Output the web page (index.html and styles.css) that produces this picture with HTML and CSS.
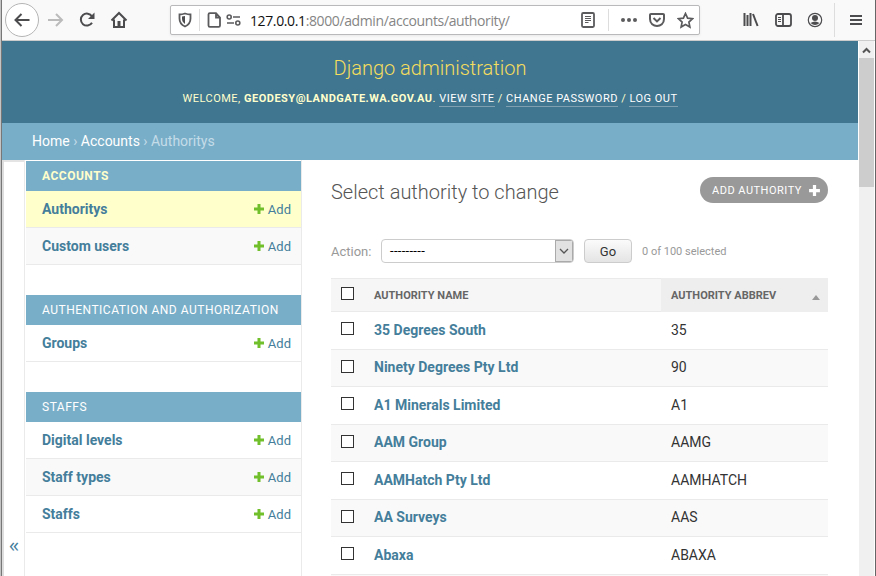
FILE: index.html
```
<!DOCTYPE html>
<html lang="en">
<head>
<meta charset="utf-8">
<title>Select authority to change</title>
<link rel="stylesheet" href="styles.css">
</head>
<body>
<svg class="defs" width="0" height="0">
  <symbol id="plus" viewBox="0 0 12 12"><path d="M4.500 1h3v3.500H11v3H7.500V11h-3V7.500H1v-3h3.500z"/></symbol>
</svg>
<div class="window">
  <div class="toolbar">
    <span class="back"><svg width="18" height="16" viewBox="0 0 18 16"><path d="M8.500 2 2.500 8l6 6M3 8h13.500"/></svg></span>
    <svg class="forward" width="18" height="16" viewBox="0 0 18 16"><path d="M9 2l6 6-6 6M15 8H1"/></svg>
    <svg class="reload" width="18" height="18" viewBox="0 0 18 18"><path d="M14 11.700A6 6 0 1 1 14 5.500"/><path class="solid" d="M16.500 1.500v6.500H10z"/></svg>
    <svg class="home" width="18" height="18" viewBox="0 0 18 18"><path d="M1.500 9.500 9 2l7.500 7.500M4 8.500V16h10V8.500"/><path class="solid" d="M7.500 10h3v6h-3z"/></svg>
    <div class="urlbar">
      <svg class="shield" width="14" height="16" viewBox="0 0 14 16"><path d="M7 1.500c2 .7 3.500 1 5.500 1v4c0 4-2 6.500-5.500 8-3.500-1.500-5.500-4-5.500-8v-4c2 0 3.500-.3 5.500-1z"/><path class="solid" d="M7 4v8C5 10.500 4 9 4 6.500V4.500z"/></svg>
      <i class="sep"></i>
      <svg class="page" width="14" height="16" viewBox="0 0 14 16"><path d="M1.500 2.500q0-1.300 1.300-1.300H9L13 5.500v8q0 1.300-1.300 1.300H2.800q-1.300 0-1.300-1.300zM9 1v4.500h4"/></svg>
      <svg class="perms" width="15" height="12" viewBox="0 0 15 12"><circle cx="3.200" cy="3" r="2"/><path d="M7 3h7M1 9h7"/><circle cx="11.800" cy="9" r="2"/></svg>
      <span class="url"><b>127.0.0.1</b>:8000/admin/accounts/authority/</span>
      <svg class="reader" width="14" height="16" viewBox="0 0 14 16"><rect x="1" y="1" width="12" height="14" rx="1.200"/><path class="thin" d="M4 4.500h6M4 6.500h6M4 8.500h6M4 10.500h3.500"/></svg>
      <i class="sep"></i>
      <svg class="dots" width="18" height="6" viewBox="0 0 18 6"><circle cx="3" cy="3" r="2"/><circle cx="9" cy="3" r="2"/><circle cx="15" cy="3" r="2"/></svg>
      <svg class="pocket" width="16" height="14" viewBox="0 0 16 14"><path d="M1 1.800Q1 1 2 1h12q1 0 1 .8V6c0 9.300-14 9.300-14 0zM4.500 5 8 8.400 11.500 5"/></svg>
      <svg class="star" width="17" height="17" viewBox="0 0 17 17"><path d="M8.500 1.500l2.100 4.600 5 .6-3.700 3.400 1 5-4.400-2.500-4.400 2.500 1-5L1.400 6.700l5-.6z"/></svg>
    </div>
    <svg class="library" width="16" height="16" viewBox="0 0 16 16"><path d="M1.500 1v13M4.500 3v11M7.500 1v13"/><path d="M10 2l4.600 12"/></svg>
    <svg class="side" width="17" height="14" viewBox="0 0 17 14"><rect x="1" y="1" width="15" height="12" rx="2"/><path d="M8 1v12"/><path class="thin" d="M3 4.500h3M3 6.500h3M3 8.500h3"/></svg>
    <svg class="account" width="16" height="16" viewBox="0 0 16 16"><circle cx="8" cy="8" r="6.700"/><circle class="solid" cx="8" cy="6" r="3"/><path class="solid" d="M3.500 11Q8 8 12.500 11 8 15 3.500 11z"/></svg>
    <i class="sep menu-sep"></i>
    <svg class="menu" width="12" height="12" viewBox="0 0 12 12"><path d="M0 2h12M0 6h12M0 10h12"/></svg>
  </div>

  <div class="viewport">
    <div class="site">
      <header>
        <h1>Django administration</h1>
        <div class="tools">Welcome, <strong>geodesy@landgate.wa.gov.au</strong>. <a>View site</a> / <a>Change password</a> / <a>Log out</a></div>
      </header>
      <nav class="crumbs"><a>Home</a> › <a>Accounts</a> › Authoritys</nav>
      <div class="main">
        <div class="toggle">«</div>
        <aside>
          <section>
            <h2 class="current">Accounts</h2>
            <div class="model selected"><a>Authoritys</a><span class="add"><svg><use href="#plus"/></svg>Add</span></div>
            <div class="model alt"><a>Custom users</a><span class="add"><svg><use href="#plus"/></svg>Add</span></div>
          </section>
          <section>
            <h2>Authentication and Authorization</h2>
            <div class="model"><a>Groups</a><span class="add"><svg><use href="#plus"/></svg>Add</span></div>
          </section>
          <section>
            <h2>Staffs</h2>
            <div class="model"><a>Digital levels</a><span class="add"><svg><use href="#plus"/></svg>Add</span></div>
            <div class="model alt"><a>Staff types</a><span class="add"><svg><use href="#plus"/></svg>Add</span></div>
            <div class="model"><a>Staffs</a><span class="add"><svg><use href="#plus"/></svg>Add</span></div>
          </section>
        </aside>
        <main>
          <div class="title-row"><h3>Select authority to change</h3><a class="addlink"><span>Add authority</span><svg><use href="#plus"/></svg></a></div>
          <div class="actions">
            <label>Action:</label>
            <div class="select"><span>---------</span><i><svg width="10" height="6" viewBox="0 0 10 6"><path d="M1 1l4 4 4-4"/></svg></i></div>
            <button>Go</button>
            <span class="count">0 of 100 selected</span>
          </div>
          <div class="table">
            <div class="row head"><i class="check"></i><span class="name">Authority name</span><span class="abbrev">Authority abbrev<i class="asc"></i></span></div>
            <div class="row"><i class="check"></i><a class="name">35 Degrees South</a><span class="abbrev">35</span></div>
            <div class="row alt"><i class="check"></i><a class="name">Ninety Degrees Pty Ltd</a><span class="abbrev">90</span></div>
            <div class="row"><i class="check"></i><a class="name">A1 Minerals Limited</a><span class="abbrev">A1</span></div>
            <div class="row alt"><i class="check"></i><a class="name">AAM Group</a><span class="abbrev">AAMG</span></div>
            <div class="row"><i class="check"></i><a class="name">AAMHatch Pty Ltd</a><span class="abbrev">AAMHATCH</span></div>
            <div class="row alt"><i class="check"></i><a class="name">AA Surveys</a><span class="abbrev">AAS</span></div>
            <div class="row"><i class="check"></i><a class="name">Abaxa</a><span class="abbrev">ABAXA</span></div>
            <div class="row alt"></div>
          </div>
        </main>
      </div>
    </div>
    <div class="scrollbar"><svg width="9" height="7" viewBox="0 0 9 7"><path d="M1 5.500l3.500-3.500L8 5.500"/></svg><div class="thumb"></div></div>
  </div>
</div>
</body>
</html>
```
FILE: styles.css
```
* { box-sizing: border-box; }
body { margin: 0; width: 876px; height: 576px; overflow: hidden; font-family: Roboto, "Liberation Sans", sans-serif; font-size: 14px; color: #333; background: #fff; }
.defs { position: absolute; }
h1, h2, h3 { margin: 0; }
.window { height: 576px; border-left: 1px solid #c4c4c4; border-right: 1px solid #666; box-shadow: inset 1px 0 #777; padding-left: 1px; display: flex; flex-direction: column; overflow: hidden; }

.toolbar { height: 41px; flex: none; background: #f9f9fa; border-bottom: 1px solid #ccc; display: flex; align-items: center; padding-left: 3px; }
.toolbar svg { flex: none; fill: none; stroke: #4c4c4f; stroke-width: 2; }
.toolbar svg .solid { fill: #4c4c4f; stroke: none; }
.toolbar svg .thin { stroke-width: 1; }
.back { width: 34px; height: 34px; flex: none; border: 1px solid #b5b5b5; border-radius: 50%; background: #fff; display: flex; align-items: center; justify-content: center; }
.toolbar .forward { stroke: #bbb; margin-left: 8px; }
.toolbar .reload { margin-left: 13px; }
.toolbar .home { margin-left: 14px; }
.urlbar { width: 530px; height: 30px; flex: none; margin-left: 42px; border: 1px solid #b9b9bb; border-radius: 2px; background: #fff; display: flex; align-items: center; padding-left: 7px; box-shadow: 0 1px 3px #0001; }
.urlbar svg { stroke: #5b5b5e; }
.sep { width: 1px; height: 22px; background: #ddd; flex: none; }
.urlbar .shield { stroke-width: 1.800; }
.urlbar .shield + .sep { margin-left: 7px; }
.urlbar .page { margin-left: 7px; stroke-width: 1.800; }
.urlbar .perms { margin-left: 5px; stroke-width: 1.600; }
.url { width: 320px; margin-left: 9px; padding-top: 1px; font-family: "Open Sans", "Noto Sans", sans-serif; font-size: 14px; line-height: 20px; color: #858585; letter-spacing: -.38px; white-space: nowrap; }
.url b { font-weight: 400; color: #111; }
.urlbar .reader { margin-left: 11px; stroke-width: 1.800; }
.urlbar .reader + .sep { margin-left: 13px; }
.urlbar .dots { margin-left: 11px; fill: #5b5b5e; stroke: none; }
.urlbar .pocket { margin-left: 11px; }
.urlbar .star { margin-left: 12px; stroke-width: 1.700; }
.toolbar .library { margin-left: 43px; }
.toolbar .side { margin-left: 16px; stroke-width: 1.800; }
.toolbar .account { margin-left: 15px; stroke-width: 1.200; }
.menu-sep { height: 34px; margin-left: 11px; }
.toolbar .menu { margin-left: 15px; }

.viewport { flex: 1; display: flex; min-height: 0; }
.site { width: 856px; display: flex; flex-direction: column; }
header { height: 82px; flex: none; background: #417690; color: #ffc; text-align: center; padding-top: 15px; }
h1 { font-size: 20px; font-weight: 300; line-height: 24px; color: #f5dd5d; }
.tools { margin-top: 11px; font-size: 11px; line-height: 16px; letter-spacing: .5px; text-transform: uppercase; }
.tools a { color: #fff; border-bottom: 1px solid #7fa0b1; display: inline-block; height: 16px; }
.crumbs { height: 37px; flex: none; background: #79aec8; color: #c4dce8; padding-left: 30px; line-height: 36px; font-size: 14px; }
.crumbs a { color: #fff; }
.main { flex: 1; min-height: 0; display: flex; }
.toggle { width: 23px; flex: none; border-left: 2px solid #ddd; border-right: 1px solid #eaeaea; box-shadow: inset 0 2px #e4e4e4; display: flex; align-items: flex-end; justify-content: center; padding-bottom: 18px; font-family: "Open Sans", "Noto Sans", sans-serif; font-size: 20px; line-height: 26px; color: #447e9b; }
aside { width: 277px; flex: none; border-right: 1px solid #eaeaea; padding: 1px 0 0 1px; }
section { margin-bottom: 30px; }
h2 { height: 30px; padding-left: 16px; background: #79aec8; color: #fff; font-size: 12px; font-weight: 400; letter-spacing: .5px; line-height: 30px; text-transform: uppercase; }
h2.current { color: #ffc; font-weight: 700; }
.model { height: 37px; border-bottom: 1px solid #eaeaea; display: flex; align-items: center; justify-content: space-between; padding: 0 10px 0 16px; color: #447e9b; }
.model a { font-weight: 700; }
.model.alt, .row.alt { background: #f9f9f9; }
.model.selected { background: #ffc; }
.add { display: flex; align-items: center; gap: 3px; font-size: 13px; }
.add svg { width: 12px; height: 12px; fill: #70bf2b; }

main { width: 497px; margin-left: 29px; }
.title-row { height: 60px; display: flex; justify-content: space-between; padding-top: 17px; }
h3 { font-size: 20px; line-height: 30px; font-weight: 300; color: #555; }
.addlink { width: 128px; height: 26px; border-radius: 13px; background: #999; color: #fff; display: flex; align-items: center; justify-content: space-between; padding: 0 7px 0 12px; font-size: 11px; letter-spacing: .5px; text-transform: uppercase; }
.addlink svg { width: 13px; height: 13px; fill: #fff; }
.actions { margin-top: 19px; height: 24px; display: flex; align-items: center; color: #999; font-size: 13px; }
label { width: 50px; }
.select { width: 193px; height: 24px; border: 1px solid #ccc; border-radius: 4px; color: #000; display: flex; justify-content: space-between; overflow: hidden; }
.select span { padding-left: 8px; line-height: 22px; letter-spacing: .3px; }
.select i { width: 18px; border: 1px solid #aaa; background: #e1e1e1; display: flex; align-items: center; justify-content: center; }
.select svg, .scrollbar svg { fill: none; stroke: #555; stroke-width: 1.300; }
button { width: 48px; height: 24px; margin-left: 10px; padding: 0; border: 1px solid #ccc; border-radius: 4px; background: linear-gradient(#fbfbfb, #e4e4e4); font: 13px Roboto, sans-serif; color: #333; }
.count { margin-left: 10px; font-size: 11px; }
.table { margin-top: 15px; }
.row { height: 37.500px; border-bottom: 1px solid #eaeaea; display: flex; align-items: center; }
.row.alt .name, .row.alt .abbrev { padding-bottom: 1px; }
.row.head { height: 34px; border-top: 1px solid #eaeaea; background: #f6f6f6; color: #666; font-size: 11px; font-weight: 700; text-transform: uppercase; }
.check { width: 13px; height: 13px; flex: none; margin: 0 20px 3px 10px; border: 1px solid #333; background: #fff; }
.name { width: 287px; font-weight: 700; }
a.name { color: #447e9b; }
.abbrev { padding-left: 10px; }
.head .abbrev { flex: 1; height: 34px; background: #eee; display: flex; align-items: center; justify-content: space-between; padding-right: 8px; }
.asc { border: 4px solid transparent; border-top: 0; border-bottom: 5px solid #999; margin-top: 5px; }

.scrollbar { width: 16px; border-left: 1px solid #fff; background: #f0f0f0; }
.scrollbar svg { display: block; margin: 6px 0 4px 3px; stroke-width: 2; }
.thumb { height: 129px; background: #cdcdcd; }
```
